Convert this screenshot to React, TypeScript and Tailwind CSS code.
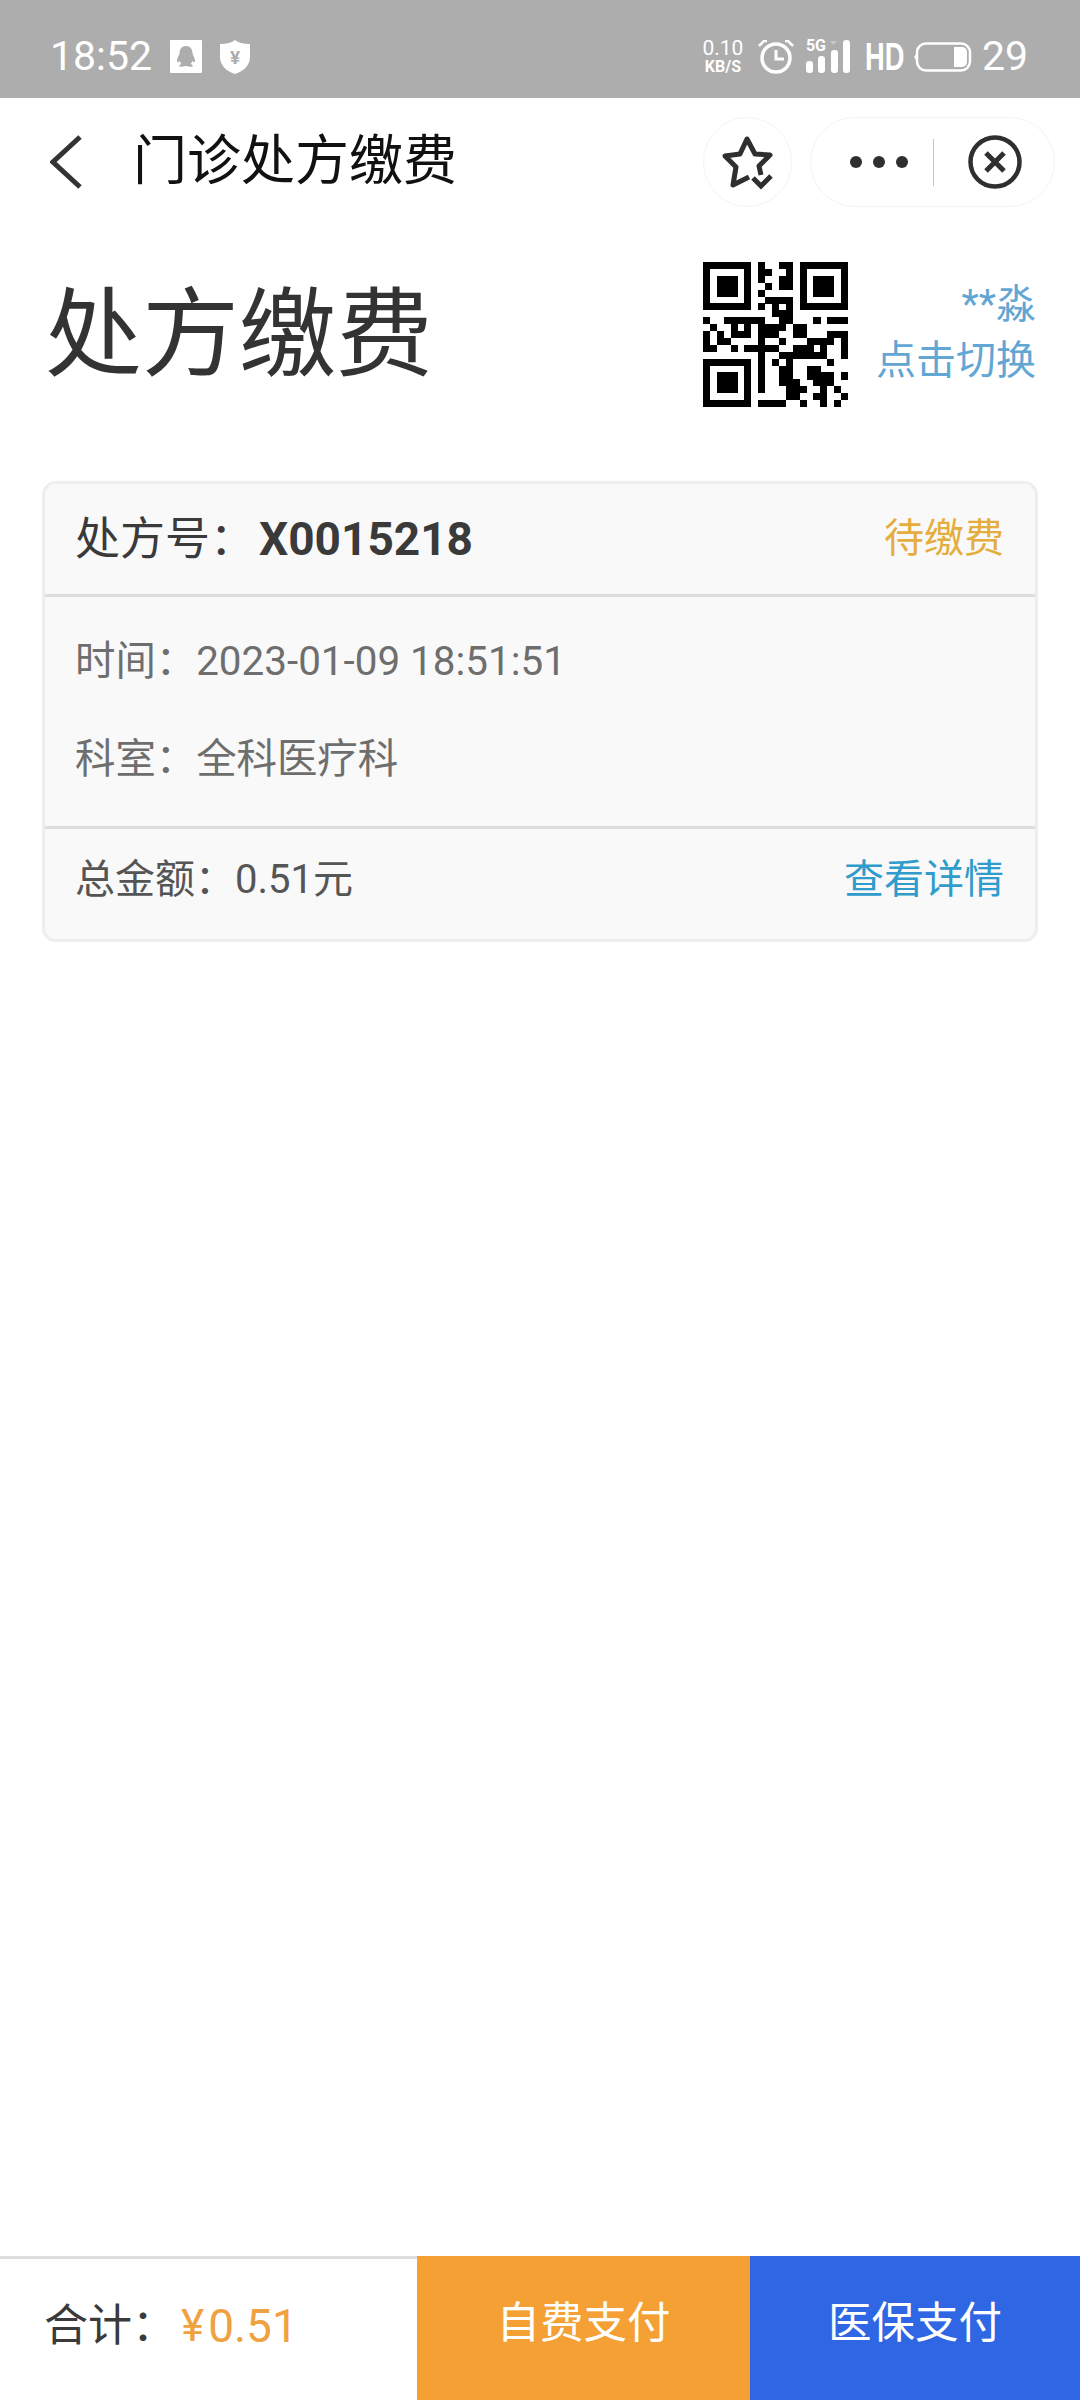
const QR_ROWS = [
  '111111101001101111111',
  '100000101100101000001',
  '101110101001101011101',
  '101110100101101011101',
  '101110101000001011101',
  '100000100111101000001',
  '111111101010101111111',
  '000000000011100000000',
  '100111111001100010111',
  '010010101111011000000',
  '101011101110011000111',
  '101100001001000111101',
  '110010111110011101001',
  '000000001001111111001',
  '111111101010100000100',
  '100000101001100110000',
  '101110101001100111101',
  '101110101001110011100',
  '101110101000111001010',
  '100000100000110011001',
  '111111101111001001010',
];

function QrCode() {
  return (
    <svg width="145" height="145" viewBox="0 0 21 21" shapeRendering="crispEdges">
      {QR_ROWS.map((row, y) =>
        row.split('').map((cell, x) =>
          cell === '1' ? <rect key={`${x}-${y}`} x={x} y={y} width="1.02" height="1.02" fill="#000" /> : null
        )
      )}
    </svg>
  );
}

function QqIcon() {
  return (
    <svg width="32" height="33" viewBox="0 0 32 33">
      <rect width="32" height="33" rx="1" fill="#fff" />
      <path
        d="M16 6c-4.500 0-6.300 3.400-6.500 7.200-.1 1.700-2.500 4.300-2.500 7.300 0 1.600.8 2.200 1.600 1.500.5-.4.900-1 1-1.200.3 1.300 1 2.400 1.800 3.200-1.500.6-2.400 1.200-2.200 2 .2.900 3.800.9 5.400.2.500-.2.900-.3 1.400-.3s.9.100 1.400.3c1.600.7 5.200.7 5.400-.2.200-.8-.7-1.400-2.200-2 .8-.8 1.500-1.900 1.800-3.200.1.200.5.800 1 1.200.8.700 1.600.1 1.600-1.500 0-3-2.400-5.600-2.500-7.300C22.300 9.400 20.500 6 16 6z"
        fill="#adadad"
      />
    </svg>
  );
}

function ShieldIcon() {
  return (
    <svg width="30" height="34" viewBox="0 0 30 34">
      <path d="M15 0c3 2.500 8 4 15 4v13c0 8-6 14-15 17C6 31 0 25 0 17V4c7 0 12-1.500 15-4z" fill="#fff" />
      <text x="15" y="24" textAnchor="middle" fontSize="19" fontWeight="700" fontFamily="Roboto" fill="#adadad">
        ¥
      </text>
    </svg>
  );
}

function AlarmIcon() {
  return (
    <svg width="36" height="34" viewBox="0 0 36 34" fill="none" stroke="#fff">
      <circle cx="18" cy="18" r="14" strokeWidth="3.500" />
      <path d="M18 10v9h8" strokeWidth="3" />
      <path d="M1 6l5-5h3M35 6l-5-5h-3" strokeWidth="2.500" />
    </svg>
  );
}

function SignalIcon() {
  return (
    <div className="relative h-[33px] w-[44px]">
      <span className="absolute left-0 top-[-1px] text-[16px] leading-[14px] font-bold text-white">5G</span>
      <svg width="44" height="33" viewBox="0 0 44 33" fill="#fff">
        <rect x="0" y="21" width="7" height="12" rx="3" />
        <rect x="12" y="16" width="7" height="17" rx="3" />
        <rect x="25" y="10" width="7" height="23" rx="3" />
        <rect x="37" y="0" width="7" height="33" rx="3" />
        <path d="M24 1h7l-3.500 4z" fill="#c8c8c8" />
      </svg>
    </div>
  );
}

function BatteryIcon() {
  return (
    <svg width="58" height="30" viewBox="0 0 58 30" fill="none">
      <path d="M0 15l3-4v8z" fill="#fff" />
      <rect x="3" y="1.500" width="53" height="27" rx="9" stroke="#fff" strokeWidth="2.500" />
      <path d="M40 5h8a5 5 0 0 1 5 5v10a5 5 0 0 1-5 5h-8z" fill="#fff" />
    </svg>
  );
}

function StarIcon() {
  return (
    <svg width="55" height="59" viewBox="0 0 55 59" fill="none" stroke="#2f2f2f" strokeWidth="5">
      <path d="M41 42l-2-9 11-11-15-1-8-15-7 15-15 2 11 11-3 18 16-8" strokeLinejoin="round" />
      <path d="M33 45l8 8 10-10" />
    </svg>
  );
}

function CloseIcon() {
  return (
    <svg width="54" height="54" viewBox="0 0 54 54" fill="none" stroke="#2f2f2f">
      <circle cx="27" cy="27" r="24.500" strokeWidth="4.500" />
      <path d="M18 18l18 18M36 18L18 36" strokeWidth="5" />
    </svg>
  );
}

export default function App() {
  return (
    <div className="flex h-[2400px] w-[1080px] flex-col bg-white font-[Roboto,'Noto_Sans_CJK_SC',sans-serif]">
      <div className="flex h-[98px] items-center justify-between bg-[#adadad] pl-[50px] pr-[52px] pt-[15px] text-white">
        <div className="flex items-center">
          <span className="text-[41px] leading-none">18:52</span>
          <span className="ml-[18px]"><QqIcon /></span>
          <span className="ml-[18px]"><ShieldIcon /></span>
        </div>
        <div className="flex items-center">
          <div className="flex w-[44px] flex-col items-center">
            <span className="text-[21px] leading-[21px]">0.10</span>
            <span className="text-[16px] leading-[16px] font-bold">KB/S</span>
          </div>
          <span className="ml-[13px]"><AlarmIcon /></span>
          <span className="ml-[12px]"><SignalIcon /></span>
          <span className="ml-[15px] w-[38px] origin-left scale-x-[0.72] font-['Liberation_Sans'] text-[38px] leading-none font-bold">HD</span>
          <span className="ml-[11px]"><BatteryIcon /></span>
          <span className="ml-[10px] text-[41px] leading-none">29</span>
        </div>
      </div>

      <div className="flex h-[128px] items-center pl-[50px] pr-[25px]">
        <svg width="32" height="54" viewBox="0 0 32 54" fill="none" stroke="#333" strokeWidth="5">
          <path d="M30 2L3 27l27 25" />
        </svg>
        <h1 className="ml-[51px] text-[54px] leading-none font-normal text-[#111]">门诊处方缴费</h1>
        <div className="ml-auto flex items-center gap-[18px]">
          <div className="flex h-[90px] w-[89px] items-center justify-center rounded-full border border-[#f4f4f4]">
            <StarIcon />
          </div>
          <div className="flex h-[90px] w-[245px] items-center rounded-full border border-[#f4f4f4] pl-[39px]">
            <div className="flex gap-[11px]">
              <span className="h-3 w-3 rounded-full bg-[#2f2f2f]" />
              <span className="h-3 w-3 rounded-full bg-[#2f2f2f]" />
              <span className="h-3 w-3 rounded-full bg-[#2f2f2f]" />
            </div>
            <span className="ml-[25px] h-[47px] w-px bg-[#c4c4c4]" />
            <span className="ml-[34px]"><CloseIcon /></span>
          </div>
        </div>
      </div>

      <div className="flex-1 px-[42px]">
        <div className="flex h-[255px] items-start">
          <h2 className="ml-[3px] mt-[54px] text-[97px] leading-[110px] font-normal text-[#333]">处方缴费</h2>
          <div className="ml-auto mt-[36px]"><QrCode /></div>
          <div className="ml-[17px] mr-[2px] mt-[55px] flex w-[171px] flex-col items-end text-[#62a6d3]">
            <span className="text-[40px] leading-[48px]">**淼</span>
            <span className="text-[40px] leading-[64px]">点击切换</span>
          </div>
        </div>

        <div className="overflow-hidden rounded-[14px] border-[3px] border-[#eeeeee] bg-[#f9f9f9]">
          <div className="flex h-[113px] items-center justify-between border-b-[3px] border-[#dddddd] pl-[30px] pr-[31px]">
            <p className="text-[45px] leading-none text-[#3a3a3a]">
              处方号：<span className="ml-[4px] text-[46px] font-bold">X0015218</span>
            </p>
            <span className="text-[40px] leading-none text-[#e5ad3d]">待缴费</span>
          </div>
          <div className="border-b-[3px] border-[#dddddd] pl-[30px] pb-[17px] pt-[16px] text-[40.4px] leading-[98px] text-[#6e6e6e]">
            <p>时间：2023-01-09 18:51:51</p>
            <p>科室：全科医疗科</p>
          </div>
          <div className="flex h-[110px] items-center justify-between pb-[8px] pl-[30px] pr-[31px]">
            <p className="text-[40px] leading-none text-[#555555]">总金额：0.51元</p>
            <span className="text-[40px] leading-none text-[#2f9ccb]">查看详情</span>
          </div>
        </div>
      </div>

      <div className="flex h-[144px]">
        <div className="flex w-[417px] items-center border-t-[3px] border-[#dddddd] pb-[8px] pl-[44px] text-[44px] leading-none">
          <span className="text-[#3a3a3a]">合计：</span>
          <span className="ml-[5px] text-[#f0a140]">¥</span>
          <span className="ml-[4px] text-[46px] text-[#f0a140]">0.51</span>
        </div>
        <div className="flex w-[333px] items-center justify-center bg-[#f5a035] pb-[8px] text-[43.5px] text-white">自费支付</div>
        <div className="flex flex-1 items-center justify-center bg-[#2f66e4] pb-[8px] text-[43.5px] text-white">医保支付</div>
      </div>
    </div>
  );
}
